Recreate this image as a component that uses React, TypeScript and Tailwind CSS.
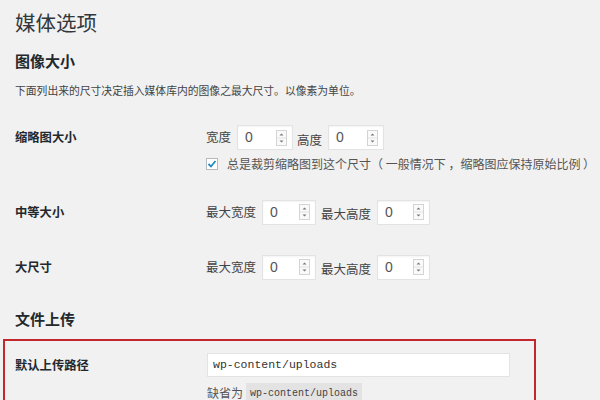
import React from "react";

const cjk = { fontFamily: '"Noto Sans CJK SC", "Noto Sans", sans-serif' };

function Spinner() {
  return (
    <svg width="11" height="16" viewBox="0 0 11 16" className="block">
      <rect x="0.5" y="0.5" width="10" height="15" fill="#fafafa" stroke="#d4d4d4" />
      <line x1="1" y1="8" x2="10" y2="8" stroke="#e2e2e2" />
      <path d="M3.5 5.5 L5.5 3.5 L7.5 5.5 Z" fill="#777" />
      <path d="M3.5 10.5 L5.5 12.5 L7.5 10.5 Z" fill="#777" />
    </svg>
  );
}

function NumInput({ w }: { w: string }) {
  return (
    <div
      className={`${w} h-[25px] bg-white border border-[#e3e3e3] flex items-center justify-between pl-[7px] pr-[5px] shadow-[inset_0_1px_2px_rgba(0,0,0,0.05)]`}
    >
      <span className="text-[14px] text-[#555]" style={{ fontFamily: '"Liberation Sans", Arial, sans-serif' }}>
        0
      </span>
      <Spinner />
    </div>
  );
}

function Label({ children }: { children: React.ReactNode }) {
  return <span className="text-[12.5px] text-[#444] mr-[6px]">{children}</span>;
}

export default function App() {
  return (
    <div className="w-[600px] h-[400px] overflow-hidden bg-[#f1f1f1] text-[#23282d]" style={cjk}>
      <div className="pl-[15px] pt-[8px]">
        <h1 className="text-[20.5px] leading-[29px] font-normal text-[#32373c]">媒体选项</h1>
        <h2 className="mt-[12px] text-[15px] leading-[24px] font-bold">图像大小</h2>
        <p className="mt-[9px] text-[10.8px] leading-[16px] text-[#444]">
          下面列出来的尺寸决定插入媒体库内的图像之最大尺寸。以像素为单位。
        </p>

        {/* Thumbnail */}
        <div className="mt-[27px] flex">
          <div className="w-[191px] flex items-center h-[25px] text-[12.3px] font-bold text-[#23282d]">缩略图大小</div>
          <div className="flex flex-col">
            <div className="flex items-center">
              <Label>宽度</Label>
              <NumInput w="w-[56px]" />
              <span className="ml-[4px]"><Label>高度</Label></span>
              <NumInput w="w-[56px]" />
            </div>
            <div className="mt-[8px] flex items-center h-[12px]">
              <div className="w-[12px] h-[12px] bg-white border border-[#b4b9be] flex items-center justify-center">
                <svg width="10" height="10" viewBox="0 0 10 10">
                  <path d="M1.5 5 L4 7.5 L8.5 2" stroke="#1e8cbe" strokeWidth="1.8" fill="none" />
                </svg>
              </div>
              <span className="ml-[9px] text-[12px] text-[#555] whitespace-nowrap">
                总是裁剪缩略图到这个尺寸（ 一般情况下 ，缩略图应保持原始比例 ）
              </span>
            </div>
          </div>
        </div>

        {/* Medium */}
        <div className="mt-[30px] flex">
          <div className="w-[191px] flex items-center h-[24px] text-[12.3px] font-bold">中等大小</div>
          <div className="flex items-center h-[24px]">
            <Label>最大宽度</Label>
            <NumInput w="w-[54px]" />
            <span className="ml-[5px]"><Label>最大高度</Label></span>
            <NumInput w="w-[53px]" />
          </div>
        </div>

        {/* Large */}
        <div className="mt-[31px] flex">
          <div className="w-[191px] flex items-center h-[24px] text-[12.3px] font-bold">大尺寸</div>
          <div className="flex items-center h-[24px]">
            <Label>最大宽度</Label>
            <NumInput w="w-[54px]" />
            <span className="ml-[5px]"><Label>最大高度</Label></span>
            <NumInput w="w-[53px]" />
          </div>
        </div>

        <h2 className="mt-[28px] text-[15px] leading-[24px] font-bold">文件上传</h2>

        <div className="mt-[8px] ml-[-12px] w-[533px] border-2 border-[#c1272d] pl-[10px] pt-[12px] pb-[30px]">
          <div className="flex">
            <div className="w-[192px] flex items-center h-[24px] text-[12.3px] font-bold">默认上传路径</div>
            <div className="flex flex-col">
              <div
                className="w-[303px] h-[24px] bg-white border border-[#e3e3e3] flex items-center pl-[5px] text-[11.5px] text-[#333]"
                style={{ fontFamily: '"Liberation Mono", "DejaVu Sans Mono", monospace' }}
              >
                wp-content/uploads
              </div>
              <div className="mt-[6px] flex items-start">
                <span className="text-[12px] text-[#555] leading-[20px] mr-[3px]">缺省为</span>
                <span
                  className="bg-[#e3e3e3] px-[4px] h-[20px] flex items-center text-[10px] text-[#444]"
                  style={{ fontFamily: '"Liberation Mono", "DejaVu Sans Mono", monospace' }}
                >
                  wp-content/uploads
                </span>
              </div>
            </div>
          </div>
        </div>
      </div>
    </div>
  );
}
